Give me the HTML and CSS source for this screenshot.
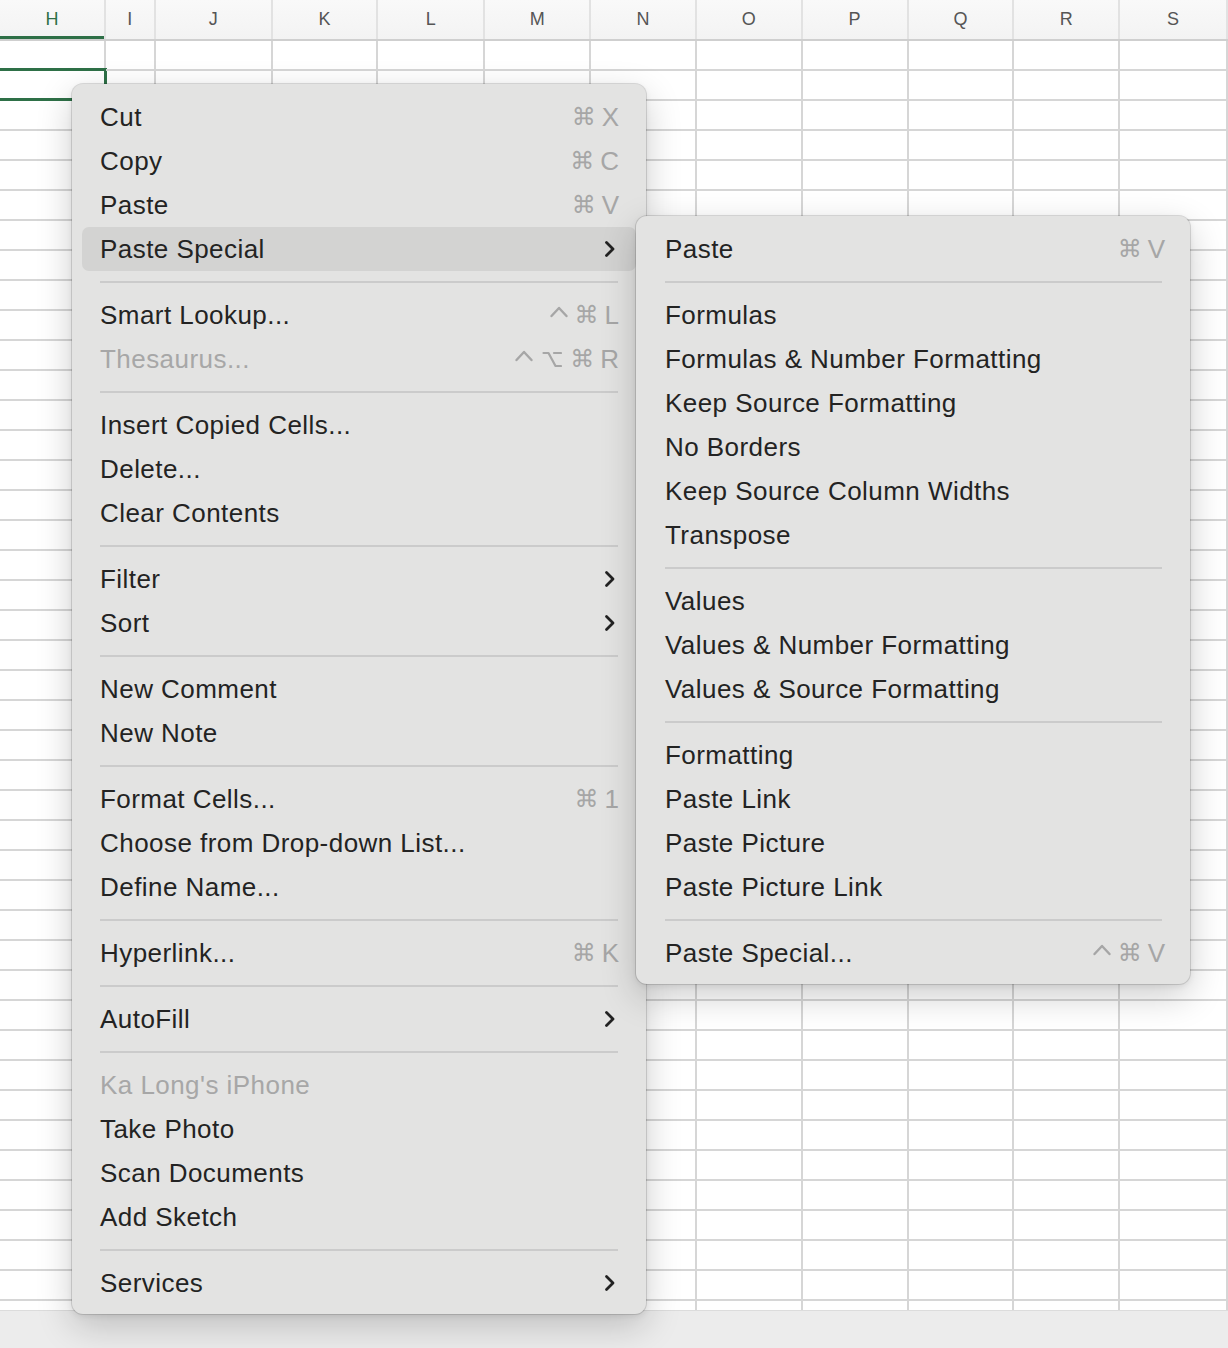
FILE: index.html
```html
<!DOCTYPE html>
<html>
<head>
<meta charset="utf-8">
<link rel="stylesheet" href="styles.css">
</head>
<body>
<div class="sheet">
  <div class="header">
    <div class="hcell col-h sel">H</div>
    <div class="hcell col-i">I</div>
    <div class="hcell col-j">J</div>
    <div class="hcell col-n">K</div>
    <div class="hcell col-n1">L</div>
    <div class="hcell col-n">M</div>
    <div class="hcell col-n">N</div>
    <div class="hcell col-n">O</div>
    <div class="hcell col-n">P</div>
    <div class="hcell col-n">Q</div>
    <div class="hcell col-n">R</div>
    <div class="hcell col-s">S</div>
  </div>
  <div class="body">
    <div class="col col-h"><div class="selcell"></div></div>
    <div class="col col-i"></div>
    <div class="col col-j"></div>
    <div class="col col-n"></div>
    <div class="col col-n1"></div>
    <div class="col col-n"></div>
    <div class="col col-n"></div>
    <div class="col col-n"></div>
    <div class="col col-n"></div>
    <div class="col col-n"></div>
    <div class="col col-n"></div>
    <div class="col col-s"></div>
  </div>
  <div class="statusbar"></div>
</div>

<div class="menu main">
  <div class="item"><span class="label">Cut</span><span class="sc"><span class="cmd">⌘</span><span>X</span></span></div>
  <div class="item"><span class="label">Copy</span><span class="sc"><span class="cmd">⌘</span><span>C</span></span></div>
  <div class="item"><span class="label">Paste</span><span class="sc"><span class="cmd">⌘</span><span>V</span></span></div>
  <div class="item active"><span class="label">Paste Special</span><svg class="chev" viewBox="0 0 12 18"><path d="M2.5 2.5 L9 9 L2.5 15.5"/></svg></div>
  <div class="sep"></div>
  <div class="item"><span class="label">Smart Lookup...</span><span class="sc"><svg class="caret" viewBox="0 0 20 26"><path d="M2.5 14 L10 6 L17.5 14"/></svg><span class="cmd">⌘</span><span>L</span></span></div>
  <div class="item disabled"><span class="label">Thesaurus...</span><span class="sc"><svg class="caret" viewBox="0 0 20 26"><path d="M2.5 14 L10 6 L17.5 14"/></svg><svg class="opt" viewBox="0 0 20 26"><path d="M1.5 7 H6.5 L13.5 20 H19"/><path d="M12 7 H19"/></svg><span class="cmd">⌘</span><span>R</span></span></div>
  <div class="sep"></div>
  <div class="item"><span class="label">Insert Copied Cells...</span></div>
  <div class="item"><span class="label">Delete...</span></div>
  <div class="item"><span class="label">Clear Contents</span></div>
  <div class="sep"></div>
  <div class="item"><span class="label">Filter</span><svg class="chev" viewBox="0 0 12 18"><path d="M2.5 2.5 L9 9 L2.5 15.5"/></svg></div>
  <div class="item"><span class="label">Sort</span><svg class="chev" viewBox="0 0 12 18"><path d="M2.5 2.5 L9 9 L2.5 15.5"/></svg></div>
  <div class="sep"></div>
  <div class="item"><span class="label">New Comment</span></div>
  <div class="item"><span class="label">New Note</span></div>
  <div class="sep"></div>
  <div class="item"><span class="label">Format Cells...</span><span class="sc"><span class="cmd">⌘</span><span>1</span></span></div>
  <div class="item"><span class="label">Choose from Drop-down List...</span></div>
  <div class="item"><span class="label">Define Name...</span></div>
  <div class="sep"></div>
  <div class="item"><span class="label">Hyperlink...</span><span class="sc"><span class="cmd">⌘</span><span>K</span></span></div>
  <div class="sep"></div>
  <div class="item"><span class="label">AutoFill</span><svg class="chev" viewBox="0 0 12 18"><path d="M2.5 2.5 L9 9 L2.5 15.5"/></svg></div>
  <div class="sep"></div>
  <div class="item disabled"><span class="label">Ka Long's iPhone</span></div>
  <div class="item"><span class="label">Take Photo</span></div>
  <div class="item"><span class="label">Scan Documents</span></div>
  <div class="item"><span class="label">Add Sketch</span></div>
  <div class="sep"></div>
  <div class="item"><span class="label">Services</span><svg class="chev" viewBox="0 0 12 18"><path d="M2.5 2.5 L9 9 L2.5 15.5"/></svg></div>
</div>

<div class="menu sub">
  <div class="item"><span class="label">Paste</span><span class="sc"><span class="cmd">⌘</span><span>V</span></span></div>
  <div class="sep"></div>
  <div class="item"><span class="label">Formulas</span></div>
  <div class="item"><span class="label">Formulas &amp; Number Formatting</span></div>
  <div class="item"><span class="label">Keep Source Formatting</span></div>
  <div class="item"><span class="label">No Borders</span></div>
  <div class="item"><span class="label">Keep Source Column Widths</span></div>
  <div class="item"><span class="label">Transpose</span></div>
  <div class="sep"></div>
  <div class="item"><span class="label">Values</span></div>
  <div class="item"><span class="label">Values &amp; Number Formatting</span></div>
  <div class="item"><span class="label">Values &amp; Source Formatting</span></div>
  <div class="sep"></div>
  <div class="item"><span class="label">Formatting</span></div>
  <div class="item"><span class="label">Paste Link</span></div>
  <div class="item"><span class="label">Paste Picture</span></div>
  <div class="item"><span class="label">Paste Picture Link</span></div>
  <div class="sep"></div>
  <div class="item"><span class="label">Paste Special...</span><span class="sc"><svg class="caret" viewBox="0 0 20 26"><path d="M2.5 14 L10 6 L17.5 14"/></svg><span class="cmd">⌘</span><span>V</span></span></div>
</div>
</body>
</html>
```
FILE: styles.css
```css
html, body {
  margin: 0;
  padding: 0;
  width: 1228px;
  height: 1348px;
  overflow: hidden;
  background: #ededed;
}

.sheet {
  position: relative;
  width: 1228px;
  height: 1348px;
  display: flex;
  flex-direction: column;
}

.header {
  display: flex;
  height: 39px;
  border-bottom: 2px solid #cfcfcf;
  background: linear-gradient(#f9f9f9, #f3f3f3);
}

.hcell {
  box-sizing: border-box;
  display: flex;
  align-items: center;
  justify-content: center;
  font-family: "Liberation Sans", Arial, sans-serif;
  font-size: 18px;
  color: #555;
  border-right: 2px solid #e2e2e2;
}

.hcell.sel {
  color: #2e7047;
  box-shadow: inset 0 -3px 0 #2e7047;
}

.col-h { width: 106px; }
.col-i { width: 50px; }
.col-j { width: 117px; }
.col-n { width: 106px; }
.col-n1 { width: 107px; }
.col-s { width: 108px; }

.body {
  display: flex;
  height: 1269px;
  background: #fff;
}

.col {
  box-sizing: border-box;
  border-right: 2px solid #d6d6d6;
  background: repeating-linear-gradient(to bottom, transparent 0, transparent 28px, #d6d6d6 28px, #d6d6d6 30px);
  position: relative;
}

.selcell {
  position: absolute;
  left: -4px;
  right: -3px;
  top: 27px;
  height: 33px;
  border: 3px solid #2e7047;
  border-left: none;
  box-sizing: border-box;
}

.statusbar {
  flex: 1;
  background: #ececec;
  border-top: 1px solid #dcdcdc;
}

/* Menus */
.menu {
  position: absolute;
  box-sizing: border-box;
  background: #e3e3e2;
  border-radius: 11px;
  padding: 11px 10px 9px;
  box-shadow: 0 0 0 1px rgba(0, 0, 0, 0.12), 0 12px 36px rgba(0, 0, 0, 0.2), 0 2px 6px rgba(0, 0, 0, 0.08);
  font-family: "Liberation Sans", Arial, sans-serif;
  font-size: 26px;
  color: #232323;
}

.main {
  left: 72px;
  top: 84px;
  width: 574px;
}

.sub {
  left: 636px;
  top: 216px;
  width: 554px;
  z-index: 2;
}

.item {
  display: flex;
  align-items: center;
  height: 44px;
  padding: 0 17px 0 18px;
  border-radius: 7px;
}

.sub .item {
  padding: 0 15px 0 19px;
}

.item .label {
  flex: 1;
  letter-spacing: 0.45px;
  white-space: nowrap;
}

.item.active {
  background: #d3d3d2;
}

.item.disabled {
  color: #a7a7a7;
}

.sc {
  display: flex;
  align-items: center;
  gap: 6px;
  color: #a6a6a6;
  font-family: "Liberation Sans", "DejaVu Sans", sans-serif;
}

.sc span {
  display: block;
}

.sc .cmd {
  font-size: 24px;
}

.caret,
.opt {
  width: 20px;
  height: 26px;
  fill: none;
  stroke: #a6a6a6;
  stroke-width: 2.4;
  stroke-linecap: round;
  stroke-linejoin: round;
}

.opt {
  stroke-width: 2.2;
  margin: 0 2px 0 2px;
}

.chev {
  width: 12px;
  height: 18px;
  margin-right: 3px;
  fill: none;
  stroke: #222;
  stroke-width: 2.8;
  stroke-linecap: round;
  stroke-linejoin: round;
}

.sep {
  height: 2px;
  margin: 10px 18px;
  background: #cbcbcb;
}

.sub .sep {
  margin: 10px 18px 10px 19px;
}
```
